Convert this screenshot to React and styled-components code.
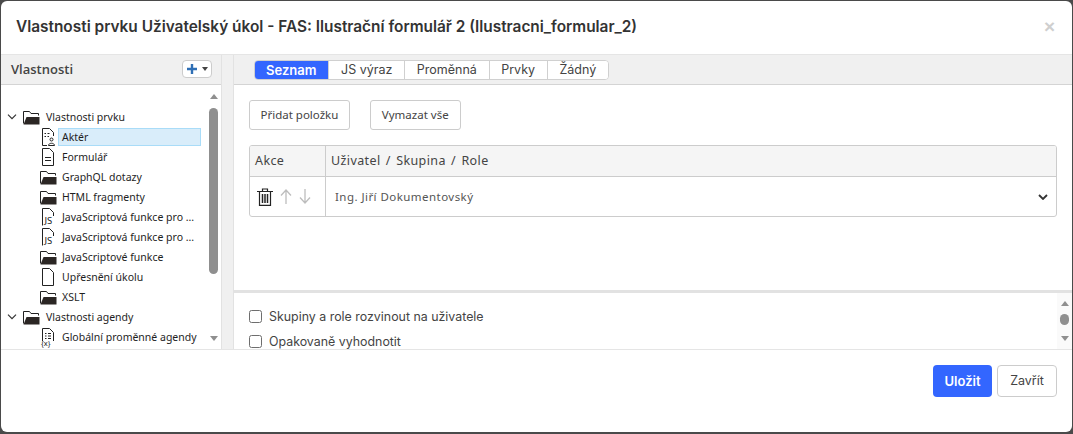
import styled, { createGlobalStyle } from "styled-components"

const GlobalStyle = createGlobalStyle`
    html, body {
        margin: 0;
        height: 100%;
        overflow: hidden;
        background: #4a4a4a;
    }
    * {
        box-sizing: border-box;
    }
`

const tree = [
    { label: "Vlastnosti prvku", icon: "folder", root: true },
    { label: "Aktér", icon: "actor", selected: true },
    { label: "Formulář", icon: "form" },
    { label: "GraphQL dotazy", icon: "folder" },
    { label: "HTML fragmenty", icon: "folder" },
    { label: "JavaScriptová funkce pro ...", icon: "js" },
    { label: "JavaScriptová funkce pro ...", icon: "js" },
    { label: "JavaScriptové funkce", icon: "folder" },
    { label: "Upřesnění úkolu", icon: "file" },
    { label: "XSLT", icon: "folder" },
    { label: "Vlastnosti agendy", icon: "folder", root: true },
    { label: "Globální proměnné agendy", icon: "vars" },
]

const tabs = ["Seznam", "JS výraz", "Proměnná", "Prvky", "Žádný"]

const sheet = "M2.5 .5H9.5L13.5 4.5V17.5H2.5Z"

const TreeIcon = ({ type }) => {
    if (type === "folder") {
        return (
            <svg width="17" height="16" viewBox="0 0 17 16">
                <path d="M.5 14.5V2.5H6.5L8 4.5H15.5V6.5" fill="none" stroke="#222" />
                <path d="M.5 15.5L3.5 8H16.5V15.5Z" fill="#2b2624" />
            </svg>
        )
    }
    if (type === "js" || type === "vars") {
        return (
            <LabelledIcon>
                <svg width="16" height="18" viewBox="0 0 16 18" fill="none" stroke="#222" strokeWidth="1">
                    {type === "js" ? (
                        <path d="M2.5 17.5V.5H9.5L13.5 4.5V8" />
                    ) : (
                        <>
                            <path d="M2.5 13V.5H9.5L13.5 4.5V13" />
                            <path d="M5 5.5H6.5M8 5.5H11M5 8H6.5M8 8H11M5 10.5H6.5M8 10.5H11" />
                        </>
                    )}
                </svg>
                <IconBadge $small={type === "vars"}>{type === "js" ? "JS" : "{x}"}</IconBadge>
            </LabelledIcon>
        )
    }
    return (
        <svg width="16" height="18" viewBox="0 0 16 18" fill="none" stroke="#222" strokeWidth="1">
            {type === "form" && (
                <>
                    <path d={sheet} />
                    <path d="M5 9.5H11M5 12.5H11" />
                </>
            )}
            {type === "file" && <path d={sheet} />}
            {type === "actor" && (
                <>
                    <path d="M7 17.5H2.5V.5H9.5L13.5 4.5V8" />
                    <path d="M4.5 5.5H6M7.5 5.5H9.5M4.5 8.5H6M7.5 8.5H9" />
                    <circle cx="11.5" cy="11.5" r="1.5" />
                    <path d="M8.5 17.5C8.5 14.5 14.5 14.5 14.5 17.5Z" />
                </>
            )}
        </svg>
    )
}

const Chevron = () => (
    <svg width="10" height="6" viewBox="0 0 10 6" fill="none" stroke="#333" strokeWidth="1.2">
        <path d="M1 .7L5 4.7L9 .7" />
    </svg>
)

const PlusIcon = () => (
    <svg width="10" height="10" viewBox="0 0 10 10" fill="none" stroke="#2f6fb5" strokeWidth="2.4">
        <path d="M5 0V10M0 5H10" />
    </svg>
)

const TrashIcon = () => (
    <svg width="16" height="18" viewBox="0 0 16 18" fill="none" stroke="#222" strokeWidth="1.2">
        <path d="M0 3.5H16M5.5 3V1H10.5V3M2.5 3.5V17.4H13.5V3.5" />
        <path d="M5.5 6V15M8 6V15M10.5 6V15" strokeWidth="1.5" />
    </svg>
)

const ArrowIcon = ({ down }) => (
    <svg width="12" height="15" viewBox="0 0 12 15" fill="none" stroke="#bdbdbd" strokeWidth="1.3" style={down ? { transform: "rotate(180deg)" } : undefined}>
        <path d="M6 15V1M1 6.5L6 1L11 6.5" />
    </svg>
)

const ScrollArrow = ({ down }) => (
    <Arrow $down={down} />
)

const App = () => {
    return (
        <Modal>
            <GlobalStyle />
            <Header>
                <Title>Vlastnosti prvku Uživatelský úkol - FAS: Ilustrační formulář 2 (Ilustracni_formular_2)</Title>
                <CloseMark>×</CloseMark>
            </Header>
            <Body>
                <LeftPanel>
                    <PanelBar>
                        <PanelTitle>Vlastnosti</PanelTitle>
                        <AddButton>
                            <PlusIcon />
                            <Caret />
                        </AddButton>
                    </PanelBar>
                    <TreeArea>
                        <TreeList>
                            {tree.map((item, i) => (
                                <TreeRow key={i} $root={item.root}>
                                    {item.root && <ChevronSlot><Chevron /></ChevronSlot>}
                                    <IconSlot><TreeIcon type={item.icon} /></IconSlot>
                                    <TreeLabel $selected={item.selected} $root={item.root}>{item.label}</TreeLabel>
                                </TreeRow>
                            ))}
                        </TreeList>
                        <TreeScroll>
                            <ScrollArrow />
                            <TreeThumb />
                            <ScrollArrow down />
                        </TreeScroll>
                    </TreeArea>
                </LeftPanel>
                <Splitter />
                <RightPanel>
                    <PanelBar $tabs>
                        <Tabs>
                            {tabs.map((tab, i) => (
                                <Tab key={tab} $active={i === 0}>{tab}</Tab>
                            ))}
                        </Tabs>
                    </PanelBar>
                    <Content>
                        <Actions>
                            <PlainButton>Přidat položku</PlainButton>
                            <PlainButton>Vymazat vše</PlainButton>
                        </Actions>
                        <Table>
                            <HeadRow>
                                <ActionCell>Akce</ActionCell>
                                <HeadCell>Uživatel / Skupina / Role</HeadCell>
                            </HeadRow>
                            <DataRow>
                                <ActionCell $icons>
                                    <TrashIcon />
                                    <ArrowIcon />
                                    <ArrowIcon down />
                                </ActionCell>
                                <SelectCell>
                                    <span>Ing. Jiří Dokumentovský</span>
                                    <SelectChevron viewBox="0 0 10 6">
                                        <path d="M1 1L5 5L9 1" />
                                    </SelectChevron>
                                </SelectCell>
                            </DataRow>
                        </Table>
                    </Content>
                    <Options>
                        <OptionList>
                            <Option><Check />Skupiny a role rozvinout na uživatele</Option>
                            <Option><Check />Opakovaně vyhodnotit</Option>
                        </OptionList>
                        <OptionScroll>
                            <ScrollArrow />
                            <OptionThumb />
                            <ScrollArrow down />
                        </OptionScroll>
                    </Options>
                </RightPanel>
            </Body>
            <Footer>
                <SaveButton>Uložit</SaveButton>
                <CloseButton>Zavřít</CloseButton>
            </Footer>
        </Modal>
    )
}

const LabelledIcon = styled.span`
    position: relative;
    display: flex;
    width: 16px;
    height: 18px;
`

const IconBadge = styled.span`
    position: absolute;
    left: ${(props) => (props.$small ? "1px" : "4.5px")};
    bottom: ${(props) => (props.$small ? "-1px" : "0")};
    font: 400 ${(props) => (props.$small ? "7.5px/8px" : "9.5px/10px")} "Noto Sans", sans-serif;
    color: #222;
`

const Modal = styled.div`
    margin: 1px 1px 0 1px;
    height: 431px;
    background: #fff;
    border-radius: 6px;
    display: flex;
    flex-direction: column;
    overflow: hidden;
    font-family: "Liberation Sans", Arial, sans-serif;
    color: #333;
`

const Header = styled.header`
    height: 54px;
    flex: none;
    display: flex;
    align-items: center;
    justify-content: space-between;
    padding: 0 17px 2px 15px;
    border-bottom: 1px solid #e5e5e5;
`

const Title = styled.h1`
    margin: 0;
    font: 600 15.4px/20px Inter, "Liberation Sans", sans-serif;
    color: #333;
`

const CloseMark = styled.span`
    font: 700 19px/20px "Liberation Sans", sans-serif;
    color: #cfcfcf;
`

const Body = styled.div`
    height: 295px;
    flex: none;
    display: flex;
    border-bottom: 1px solid #e5e5e5;
`

const LeftPanel = styled.aside`
    width: 220px;
    flex: none;
    display: flex;
    flex-direction: column;
`

const Splitter = styled.div`
    width: 13px;
    flex: none;
    background: #f0f0f0;
    border-left: 1px solid #e2e2e2;
    border-right: 1px solid #e2e2e2;
`

const RightPanel = styled.section`
    flex: 1;
    min-width: 0;
    display: flex;
    flex-direction: column;
`

const PanelBar = styled.div`
    height: 30px;
    flex: none;
    display: flex;
    align-items: center;
    justify-content: space-between;
    background: #f0f0f0;
    border-bottom: 1px solid #d4d4d4;
    padding: ${(props) => (props.$tabs ? "0 0 1px 20px" : "0 9px 2px 10px")};
`

const PanelTitle = styled.div`
    font: 600 13px/16px "Open Sans", sans-serif;
    color: #444;
`

const AddButton = styled.div`
    width: 30px;
    height: 18px;
    background: #fff;
    border: 1px solid #ccc;
    border-radius: 4px;
    display: flex;
    align-items: center;
    justify-content: center;
    gap: 5px;
`

const Caret = styled.span`
    width: 0;
    height: 0;
    border-left: 3.5px solid transparent;
    border-right: 3.5px solid transparent;
    border-top: 4px solid #444;
`

const TreeArea = styled.div`
    flex: 1;
    min-height: 0;
    display: flex;
    overflow: hidden;
`

const TreeList = styled.div`
    flex: 1;
    min-width: 0;
    padding-top: 22px;
    padding-left: 6px;
    overflow: hidden;
`

const TreeRow = styled.div`
    height: 20px;
    display: flex;
    align-items: center;
    padding-left: ${(props) => (props.$root ? "0" : "33px")};
`

const ChevronSlot = styled.span`
    width: 16px;
    flex: none;
    display: flex;
`

const IconSlot = styled.span`
    width: 17px;
    height: 18px;
    flex: none;
    display: flex;
    align-items: center;
`

const TreeLabel = styled.span`
    flex: ${(props) => (props.$selected ? "1" : "none")};
    height: 18px;
    margin-left: ${(props) => (props.$root ? "2px" : "1px")};
    margin-right: 6px;
    padding-left: 3px;
    font: 10.5px/16px "Noto Sans", sans-serif;
    color: #1e1e1e;
    white-space: nowrap;
    background: ${(props) => (props.$selected ? "#d9edfa" : "transparent")};
    border: 1px solid ${(props) => (props.$selected ? "#a9dcf8" : "transparent")};
`

const TreeScroll = styled.div`
    width: 14px;
    flex: none;
    background: #fff;
    display: flex;
    flex-direction: column;
    align-items: center;
    padding: 9px 1px 8px 0;
`

const Arrow = styled.span`
    width: 0;
    height: 0;
    flex: none;
    border-left: 4.5px solid transparent;
    border-right: 4.5px solid transparent;
    border-bottom: ${(props) => (props.$down ? "0" : "5px solid #8f8f8f")};
    border-top: ${(props) => (props.$down ? "5px solid #8f8f8f" : "0")};
    margin-top: ${(props) => (props.$down ? "auto" : "0")};
`

const TreeThumb = styled.div`
    width: 9px;
    height: 166px;
    margin-top: 9px;
    background: #8f8f8f;
    border-radius: 5px;
`

const Content = styled.div`
    flex: 1;
    min-height: 0;
    padding: 15px 15px 0 15px;
    border-bottom: 3px solid #e2e2e2;
`

const Tabs = styled.div`
    display: flex;
    height: 20px;
    border: 1px solid #d0d0d0;
    border-radius: 4px;
    background: #fff;
    overflow: hidden;
    margin-top: 1px;
`

const Tab = styled.div`
    padding: ${(props) => (props.$active ? "0 12px" : "0 11.7px")};
    font: ${(props) => (props.$active ? "600 13px" : "400 12.5px")}/18px Inter, "Liberation Sans", sans-serif;
    color: ${(props) => (props.$active ? "#fff" : "#444")};
    background: ${(props) => (props.$active ? "#3366ff" : "#fff")};
    border-left: ${(props) => (props.$active ? "0" : "1px solid #d0d0d0")};
    margin: ${(props) => (props.$active ? "-1px 0 -1px -1px" : "0")};
    line-height: ${(props) => (props.$active ? "20px" : "18px")};
`

const Actions = styled.div`
    display: flex;
    gap: 20px;
    margin-bottom: 15px;
`

const PlainButton = styled.div`
    height: 30px;
    padding: 0 11px 0 10.5px;
    border: 1px solid #ccc;
    border-radius: 3px;
    font: 11.5px/28px "Noto Sans", sans-serif;
    color: #444;
    background: #fff;
`

const Table = styled.div`
    border: 1px solid #ccc;
    border-radius: 3px;
    overflow: hidden;
`

const HeadRow = styled.div`
    height: 31px;
    display: flex;
    background: #f5f5f5;
    border-bottom: 1px solid #ccc;
`

const DataRow = styled.div`
    height: 39px;
    display: flex;
`

const ActionCell = styled.div`
    width: 76px;
    flex: none;
    display: flex;
    align-items: center;
    gap: ${(props) => (props.$icons ? "7px" : "0")};
    padding-left: ${(props) => (props.$icons ? "7px" : "5px")};
    border-right: 1px solid #ccc;
    font: 12.5px/16px "Noto Sans", sans-serif;
    letter-spacing: .4px;
    color: #444;
`

const HeadCell = styled.div`
    flex: 1;
    display: flex;
    align-items: center;
    padding-left: 5px;
    font: 12.5px/16px "Noto Sans", sans-serif;
    letter-spacing: .4px;
    word-spacing: 1.6px;
    color: #444;
`

const SelectCell = styled.div`
    flex: 1;
    display: flex;
    align-items: center;
    justify-content: space-between;
    padding: 0 8px 0 9px;
    font: 11.5px/16px "Noto Sans", sans-serif;
    letter-spacing: .45px;
    color: #555;
`

const SelectChevron = styled.svg`
    width: 10px;
    height: 6px;
    fill: none;
    stroke: #333;
    stroke-width: 1.8;
`

const Options = styled.div`
    height: 56px;
    flex: none;
    display: flex;
    overflow: hidden;
`

const OptionList = styled.div`
    flex: 1;
    padding: 15px 15px 0;
    overflow: hidden;
`

const Option = styled.label`
    display: flex;
    align-items: center;
    gap: 7px;
    height: 17px;
    margin-bottom: 8px;
    font: 12.4px/17px Inter, "Liberation Sans", sans-serif;
    color: #444;
`

const Check = styled.span`
    width: 13px;
    height: 13px;
    flex: none;
    border: 1px solid #6e6e6e;
    border-radius: 2.5px;
    background: #fff;
`

const OptionScroll = styled.div`
    width: 15px;
    flex: none;
    background: #fafafa;
    display: flex;
    flex-direction: column;
    align-items: center;
    padding: 8px 0 8px;
`

const OptionThumb = styled.div`
    width: 9px;
    height: 11px;
    margin-top: 8px;
    background: #8f8f8f;
    border-radius: 5px;
`

const Footer = styled.footer`
    flex: 1;
    display: flex;
    justify-content: flex-end;
    align-items: flex-start;
    gap: 5px;
    padding: 15px 15px 0 0;
`

const SaveButton = styled.div`
    width: 59px;
    height: 32px;
    background: #3366ff;
    border-radius: 4px;
    color: #fff;
    text-align: center;
    font: 600 13px/32px Inter, "Liberation Sans", sans-serif;
`

const CloseButton = styled.div`
    width: 60px;
    height: 32px;
    background: #fff;
    border: 1px solid #ccc;
    border-radius: 4px;
    color: #444;
    text-align: center;
    font: 12.5px/30px Inter, "Liberation Sans", sans-serif;
`

export default App
